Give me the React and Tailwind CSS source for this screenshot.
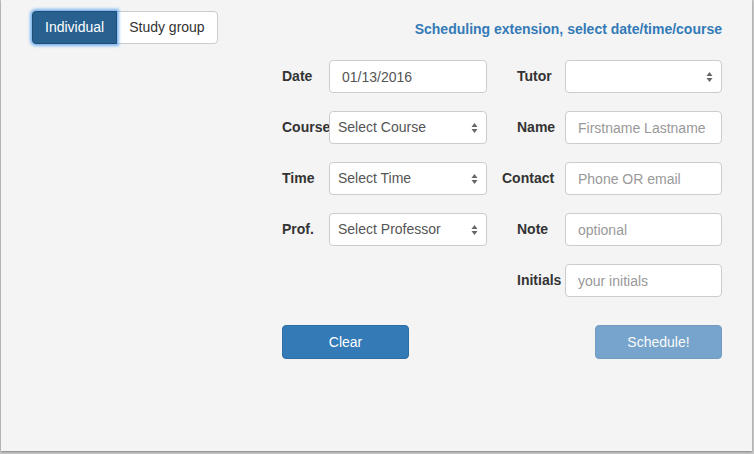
import { useState } from 'react'

function Arrows() {
  return (
    <svg
      className="pointer-events-none absolute right-[9px] top-1/2 -translate-y-1/2"
      width="7"
      height="11"
      viewBox="0 0 7 11"
    >
      <path d="M3.5 0.5 L6.5 4.5 L0.5 4.5 Z" fill="#666" />
      <path d="M3.5 10.5 L6.5 6.5 L0.5 6.5 Z" fill="#666" />
    </svg>
  )
}

function Select({ children, width }) {
  return (
    <div className={`relative ${width}`}>
      <select className="w-full h-[33px] appearance-none rounded-[4px] border border-[#ccc] bg-white pl-[8px] pr-6 text-[14px] text-[#555] outline-none">
        {children}
      </select>
      <Arrows />
    </div>
  )
}

function TextInput({ placeholder, value, width = 'w-[157px]' }) {
  return (
    <input
      type="text"
      defaultValue={value}
      placeholder={placeholder}
      className={`${width} h-[33px] rounded-[4px] border border-[#ccc] bg-white px-[12px] text-[14px] text-[#555] placeholder:text-[#999] outline-none`}
    />
  )
}

function Row({ label, children, labelClass = 'w-[48px]' }) {
  return (
    <div className="flex items-center h-[33px]">
      <label className={`shrink-0 font-bold text-[14px] text-[#333] whitespace-nowrap ${labelClass}`}>
        {label}
      </label>
      {children}
    </div>
  )
}

export default function App() {
  const [mode, setMode] = useState('individual')

  return (
    <div className="w-[754px] h-[454px] bg-[#c9c9c9] font-['Liberation_Sans',Arial,sans-serif]">
      <div className="ml-[1px] w-[751px] h-[451px] bg-[#f4f4f4] shadow-[0_1px_2px_rgba(0,0,0,0.35)]">
        {/* barra superior */}
        <div className="flex items-center justify-between pl-[31px] pr-[30px] pt-[11px]">
          <div className="flex">
            <button
              onClick={() => setMode('individual')}
              className={`h-[33px] px-[12px] text-[14px] rounded-l-[4px] border ${
                mode === 'individual'
                  ? 'bg-[#286090] border-[#204d74] text-white shadow-[0_0_3px_2px_rgba(82,160,236,0.75)] z-10'
                  : 'bg-white border-[#ccc] text-[#333]'
              }`}
            >
              Individual
            </button>
            <button
              onClick={() => setMode('group')}
              className={`h-[33px] px-[12px] text-[14px] rounded-r-[4px] border -ml-px ${
                mode === 'group'
                  ? 'bg-[#286090] border-[#204d74] text-white'
                  : 'bg-white border-[#ccc] text-[#333]'
              }`}
            >
              Study group
            </button>
          </div>
          <h2 className="text-[14px] font-bold text-[#337ab7] pt-[4px]">
            Scheduling extension, select date/time/course
          </h2>
        </div>

        {/* formulario */}
        <div className="ml-[281px] w-[440px] mt-[16px]">
          <div className="grid grid-cols-[205px_205px] gap-x-[30px] gap-y-[18px]">
            <Row label="Date" labelClass="w-[47px]">
              <TextInput value="01/13/2016" width="w-[158px]" />
            </Row>
            <Row label="Tutor">
              <Select width="w-[157px]">
                <option></option>
              </Select>
            </Row>

            <Row label="Course" labelClass="w-[47px]">
              <Select width="w-[158px]">
                <option>Select Course</option>
              </Select>
            </Row>
            <Row label="Name">
              <TextInput placeholder="Firstname Lastname" />
            </Row>

            <Row label="Time" labelClass="w-[47px]">
              <Select width="w-[158px]">
                <option>Select Time</option>
              </Select>
            </Row>
            <Row label="Contact" labelClass="-ml-[15px] w-[63px]">
              <TextInput placeholder="Phone OR email" />
            </Row>

            <Row label="Prof." labelClass="w-[47px]">
              <Select width="w-[158px]">
                <option>Select Professor</option>
              </Select>
            </Row>
            <Row label="Note">
              <TextInput placeholder="optional" />
            </Row>

            <div />
            <Row label="Initials">
              <TextInput placeholder="your initials" />
            </Row>
          </div>

          <div className="flex justify-between mt-[28px]">
            <button className="w-[127px] h-[34px] rounded-[4px] bg-[#337ab7] border border-[#2e6da4] text-white text-[14px]">
              Clear
            </button>
            <button
              disabled
              className="w-[127px] h-[34px] rounded-[4px] bg-[#337ab7] border border-[#2e6da4] text-white text-[14px] opacity-65"
            >
              Schedule!
            </button>
          </div>
        </div>
      </div>
    </div>
  )
}
